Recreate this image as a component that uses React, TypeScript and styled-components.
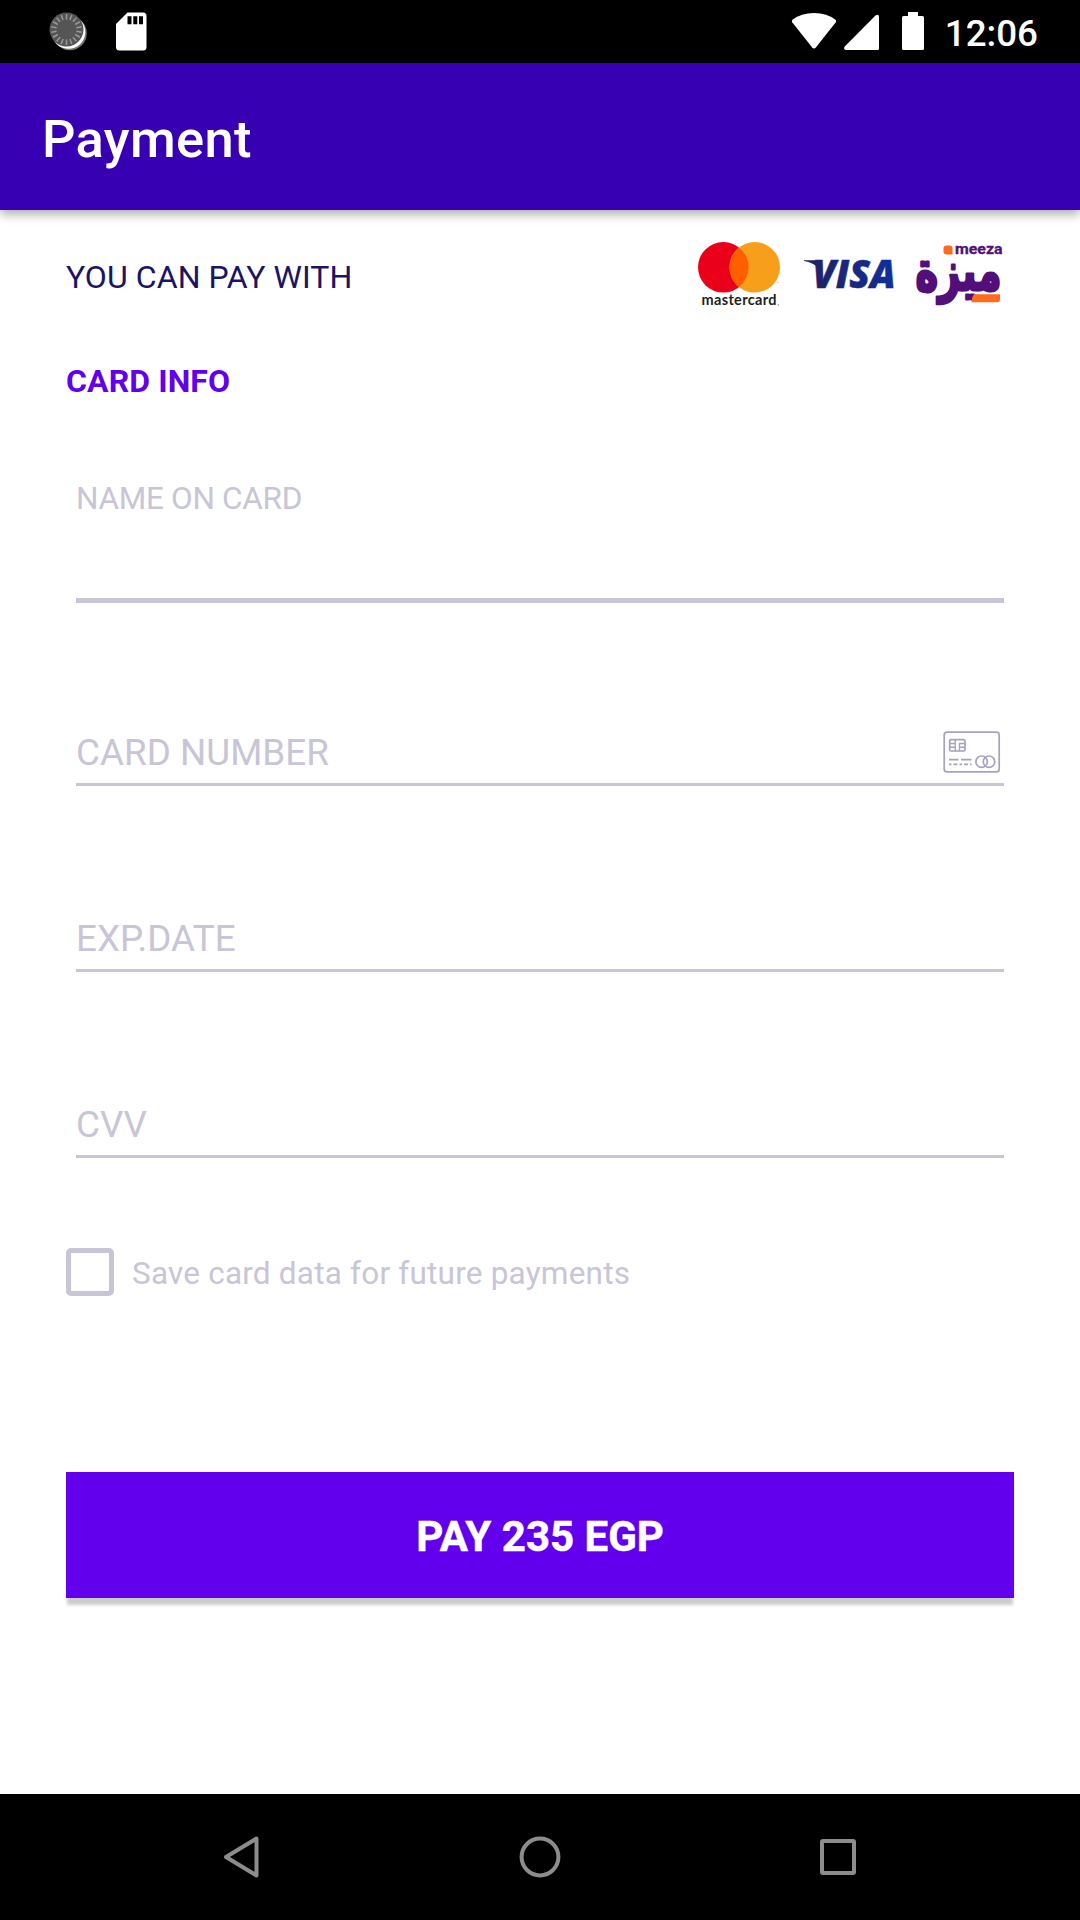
import React from 'react';
import styled, { createGlobalStyle } from 'styled-components';

const color = {
  bar: '#3700b3',
  primary: '#6200ee',
  ink: '#1b1464',
  muted: '#c8c5d6',
  icon: '#a6a2bf',
};

const GlobalStyle = createGlobalStyle`
  * { box-sizing: border-box; }
  body { margin: 0; background: #fff; }
  svg { display: block; flex: none; overflow: visible; }
`;

const Screen = styled.div`
  width: 1080px;
  height: 1920px;
  display: flex;
  flex-direction: column;
  overflow: hidden;
  background: #fff;
  font-family: Roboto, 'Liberation Sans', sans-serif;
`;

const StatusBar = styled.header`
  height: 63px;
  flex: none;
  display: flex;
  align-items: stretch;
  justify-content: space-between;
  padding: 0 42px 0 49px;
  background: #000;
`;

const StatusGroup = styled.div`
  display: flex;
`;

const Clock = styled.time`
  margin-left: 20px;
  color: #fff;
  font-size: 36.75px;
  font-weight: 500;
  line-height: 67px;
`;

const AppBar = styled.div`
  height: 147px;
  flex: none;
  display: flex;
  align-items: center;
  padding: 4px 42px 0;
  background: ${color.bar};
  box-shadow: 0 4px 10px rgba(0, 0, 0, 0.34);
`;

const Title = styled.h1`
  margin: 0;
  color: #fff;
  font-size: 52.5px;
  font-weight: 500;
  letter-spacing: 0.35px;
  line-height: 62px;
`;

const Content = styled.main`
  flex: 1;
  display: flex;
  flex-direction: column;
  padding: 27px 66px 0;
`;

const MethodsRow = styled.div`
  height: 80px;
  display: flex;
  align-items: center;
  justify-content: space-between;
  padding-right: 12px;
`;

const MethodsLabel = styled.span`
  color: ${color.ink};
  font-size: 32px;
  letter-spacing: 0.08px;
  line-height: 40px;
`;

const Logos = styled.div`
  display: flex;
  gap: 20px;
`;

const SectionTitle = styled.h2`
  margin: 44px 0 0;
  color: ${color.primary};
  font-size: 32px;
  font-weight: 700;
  letter-spacing: 0.1px;
  line-height: 40px;
`;

const Fields = styled.div`
  display: flex;
  flex-direction: column;
  padding: 0 10px;
`;

const ActiveField = styled.div`
  height: 202px;
  padding-top: 78px;
  border-bottom: 5px solid ${color.muted};
  color: ${color.muted};
  font-size: 31.5px;
  letter-spacing: -0.3px;
  line-height: 40px;
`;

const Field = styled.div<{ $height?: number }>`
  height: ${p => p.$height ?? 186}px;
  display: flex;
  flex-direction: column;
  justify-content: flex-end;
  border-bottom: 3px solid ${color.muted};
  color: ${color.muted};
  font-size: 36.75px;
  letter-spacing: 0.05px;
  line-height: 40px;
`;

const FieldLine = styled.div`
  display: flex;
  align-items: center;
  justify-content: space-between;
  height: 44px;
  margin-bottom: 9px;
  padding-right: 3px;
`;

const FieldText = styled.span`
  padding-top: 2px;
`;

const SaveRow = styled.label`
  display: flex;
  align-items: center;
  gap: 18px;
  margin-top: 90px;
  color: ${color.muted};
  font-size: 31.5px;
  letter-spacing: 0.21px;
  line-height: 44px;
`;

const SaveText = styled.span`
  padding-top: 4px;
`;

const CheckBox = styled.span`
  width: 48px;
  height: 48px;
  border: 5px solid ${color.muted};
  border-radius: 5px;
`;

const PayButton = styled.button`
  height: 126px;
  margin-top: 176px;
  padding: 3px 0 0;
  border: 0;
  background: ${color.primary};
  box-shadow: 0 8px 3px -1px rgba(0, 0, 0, 0.2);
  color: #fff;
  font-family: inherit;
  font-size: 42px;
  font-weight: 700;
  -webkit-text-stroke: 0.5px #fff;
`;

const NavBar = styled.nav`
  height: 126px;
  flex: none;
  display: flex;
  justify-content: center;
  align-items: center;
  gap: 246px;
  background: #000;
`;

const SpinnerIcon = () => (
  <svg width="40" height="63" viewBox="0 0 40 63">
    <circle cx="20.800" cy="33.200" r="17" fill="#777" />
    <circle cx="19.500" cy="32" r="16.800" fill="#fff" />
    <circle cx="17.500" cy="29.500" r="17" fill="#555" />
    {Array.from({ length: 18 }, (_, i) => (
      <line key={i} x1="17.500" y1="14" x2="17.500" y2="19.500" stroke="#999" strokeWidth="1.500" transform={`rotate(${i * 20} 17.5 29.5)`} />
    ))}
  </svg>
);

const SdIcon = () => (
  <svg width="60" height="63" viewBox="89 0 60 63">
    <path d="M127.500 12.500H143a3.500 3.500 0 0 1 3.500 3.500v31a3.500 3.500 0 0 1-3.500 3.500H119.500a3.500 3.500 0 0 1-3.500-3.500V24z" fill="#fff" />
    <path d="M127.500 16.300h4v8h-4zM133.300 16.300h4v8h-4zM139 16.300h4v8h-4z" fill="#000" />
  </svg>
);

const SignalIcons = () => (
  <svg width="135" height="63" viewBox="790 0 135 63">
    <g fill="#fff">
      <path d="M792.400 19.800Q801 13 814 13T835.600 19.800Q836.600 21 835.800 22.300L816 47.300Q814 49.800 812 47.300L792.200 22.300Q791.400 21 792.400 19.800z" />
      <path d="M845 46.200L875.500 15.400Q879 13.600 879 17V48.500Q879 50 877.500 50H846Q842.700 49 845 46.200z" />
      <path d="M908 12h10v4h4.500q1.500 0 1.500 1.500v31q0 1.500-1.500 1.500h-19q-1.500 0-1.500-1.500v-31q0-1.500 1.500-1.500h4.500z" />
    </g>
  </svg>
);

const MastercardLogo = () => (
  <svg width="85" height="80" viewBox="698 237 85 80">
    <circle cx="723.300" cy="267.300" r="25.300" fill="#eb001b" />
    <circle cx="754.700" cy="267.300" r="25.300" fill="#f79e1b" />
    <path d="M739 247.460a25.300 25.300 0 0 1 0 39.680a25.300 25.300 0 0 1 0-39.680z" fill="#ff5f00" />
    <text x="701.500" y="305.400" textLength="75" lengthAdjust="spacing" fontFamily="Lato, sans-serif" fontWeight="700" fontSize="14.500" fill="#231f20">mastercard</text>
    <circle cx="778.200" cy="304.900" r="0.600" fill="#555" />
    <circle cx="778" cy="282.500" r="0.600" fill="#f79e1b" />
  </svg>
);

const VisaLogo = () => (
  <svg width="91" height="80" viewBox="803 237 91 80">
    <defs>
      <linearGradient id="visa" gradientUnits="userSpaceOnUse" x1="804" y1="288" x2="894" y2="260">
        <stop offset="0" stopColor="#221f5f" />
        <stop offset="1" stopColor="#0f309f" />
      </linearGradient>
    </defs>
    <path d="M804 260.300H817.500l3 9Q813 262.500 804 261z" fill="url(#visa)" />
    <text x="812.500" y="287.800" textLength="83" lengthAdjust="spacingAndGlyphs" fontFamily="'Open Sans', sans-serif" fontStyle="italic" fontWeight="800" fontSize="38.500" fill="url(#visa)" stroke="url(#visa)" strokeWidth="0.500">VISA</text>
  </svg>
);

const MeezaLogo = () => (
  <svg width="88" height="80" viewBox="915 237 88 80">
    <text x="956" y="254.200" textLength="47.500" lengthAdjust="spacingAndGlyphs" fontFamily="Roboto, sans-serif" fontWeight="700" fontSize="14.500" fill="#520f79" stroke="#520f79" strokeWidth="0.300">meeza</text>
    <g transform="translate(916.500 290) scale(1 1.200)">
      <text x="0" y="0" textLength="86" lengthAdjust="spacingAndGlyphs" fontFamily="'DejaVu Sans', sans-serif" fontWeight="700" fontSize="46" fill="#520f79" stroke="#520f79" strokeWidth="2.400" strokeLinejoin="round">ميزة</text>
    </g>
    <path d="M947.500 245.500h3q3 0 3 3v6h-6q-3 0-3-3v-3q0-3 3-3z" fill="#ff6a1c" />
    <path d="M975.500 294.200H1001v5q0 3-3 3H972.500q.5-7 3-8z" fill="#ff6a1c" />
  </svg>
);

const CardIcon = () => (
  <svg width="59" height="44" viewBox="942 730 59 44" fill="none" stroke={color.icon} strokeWidth="1.700">
    <rect x="944.200" y="732.200" width="55" height="39.700" rx="3" />
    <rect x="949.700" y="739.700" width="15.300" height="11.300" rx="1.200" />
    <path d="M949.700 743.500h5.500M949.700 747.300h5.500M955.200 739.700v11.300M965 743.500h-5.500v7.500M959.500 747.300h5.500" strokeWidth="1.400" />
    <path d="M949 759.600h9.500M961 759.600h10.500" />
    <path d="M949 764.400h2.500M953.500 764.400h4M959.500 764.400h2.500M964 764.400h4M970 764.400h1.500" />
    <circle cx="981.600" cy="761.700" r="5.700" />
    <circle cx="989" cy="761.700" r="5.700" />
  </svg>
);

const BackIcon = () => (
  <svg width="52" height="52" viewBox="216 1831 52 52">
    <path d="M256.500 1838.500v37L226 1857z" fill="none" stroke="#8c8c8c" strokeWidth="4" strokeLinejoin="round" />
  </svg>
);

const HomeIcon = () => (
  <svg width="52" height="52" viewBox="0 0 52 52">
    <circle cx="26" cy="26" r="18.400" fill="none" stroke="#8c8c8c" strokeWidth="4" />
  </svg>
);

const RecentsIcon = () => (
  <svg width="52" height="52" viewBox="0 0 52 52">
    <rect x="10" y="10" width="32" height="32" rx="1" fill="none" stroke="#8c8c8c" strokeWidth="4" />
  </svg>
);

export default function App() {
  return (
    <>
      <GlobalStyle />
      <Screen>
        <StatusBar>
          <StatusGroup>
            <SpinnerIcon />
            <SdIcon />
          </StatusGroup>
          <StatusGroup>
            <SignalIcons />
            <Clock>12:06</Clock>
          </StatusGroup>
        </StatusBar>
        <AppBar>
          <Title>Payment</Title>
        </AppBar>
        <Content>
          <MethodsRow>
            <MethodsLabel>YOU CAN PAY WITH</MethodsLabel>
            <Logos>
              <MastercardLogo />
              <VisaLogo />
              <MeezaLogo />
            </Logos>
          </MethodsRow>
          <SectionTitle>CARD INFO</SectionTitle>
          <Fields>
            <ActiveField>NAME ON CARD</ActiveField>
            <Field $height={183}>
              <FieldLine>
                <FieldText>CARD NUMBER</FieldText>
                <CardIcon />
              </FieldLine>
            </Field>
            <Field>
              <FieldLine>
                <FieldText>EXP.DATE</FieldText>
              </FieldLine>
            </Field>
            <Field>
              <FieldLine>
                <FieldText>CVV</FieldText>
              </FieldLine>
            </Field>
          </Fields>
          <SaveRow>
            <CheckBox />
            <SaveText>Save card data for future payments</SaveText>
          </SaveRow>
          <PayButton>PAY 235 EGP</PayButton>
        </Content>
        <NavBar>
          <BackIcon />
          <HomeIcon />
          <RecentsIcon />
        </NavBar>
      </Screen>
    </>
  );
}
